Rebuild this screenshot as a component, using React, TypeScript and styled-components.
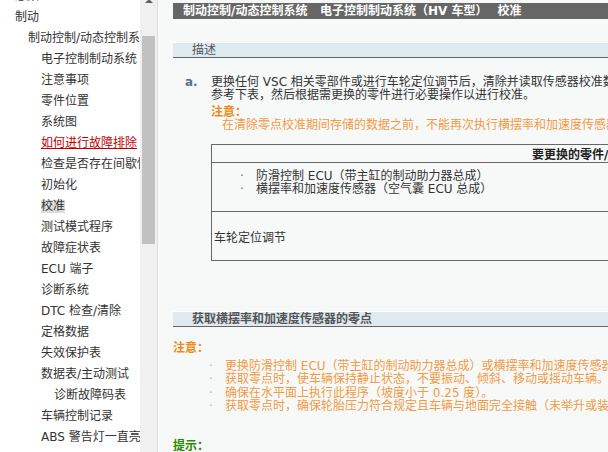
import styled, { createGlobalStyle } from "styled-components";

const GlobalStyle = createGlobalStyle`
  html, body {
    margin: 0;
    padding: 0;
    overflow: hidden;
  }
  body {
    font-family: "DejaVu Sans", "Noto Sans CJK SC", sans-serif;
    font-size: 12px;
    color: #333;
  }
`;

export const Page = styled.div`
  display: flex;
  height: 452px;
  width: 608px;
  overflow: hidden;
`;

export const NavPane = styled.div`
  background: #fff;
  flex: 0 0 140px;
  overflow: hidden;
`;

export const Tree = styled.ul`
  list-style: none;
  margin: -14px 0 0;
  padding: 0;
`;

export const TreeItem = styled.li<{ $level: number }>`
  color: #333;
  line-height: 21px;
  padding-left: ${(props) => 2 + props.$level * 13}px;
  white-space: nowrap;
`;

export const TreeLink = styled.span`
  color: #c00000;
  text-decoration: underline;
`;

export const TreeCurrent = styled.span`
  background: #dcdcdc;
  display: inline-block;
  line-height: 13px;
`;

export const ScrollTrack = styled.div`
  background: #f0f0f0;
  display: flex;
  flex: 0 0 17px;
  flex-direction: column;
  align-items: center;
`;

export const ScrollArrow = styled.div`
  border-bottom: 4px solid #606060;
  border-left: 4px solid transparent;
  border-right: 4px solid transparent;
  height: 0;
  margin-top: -1px;
  width: 0;
`;

export const ScrollThumb = styled.div`
  background: #c1c1c1;
  height: 208px;
  margin-top: 33px;
  width: 13px;
`;

export const Divider = styled.div`
  background: #dedede;
  flex: 0 0 1px;
`;

export const Content = styled.div`
  background: #f7f9f9;
  flex: 1;
  min-width: 0;
  overflow: hidden;
  padding: 3px 0 0 15px;
`;

export const Inner = styled.div`
  width: 760px;
`;

export const TitleBar = styled.div`
  background: #666;
  color: #fff;
  display: flex;
  font-weight: bold;
  gap: 10px;
  height: 16px;
  line-height: 16px;
  padding-left: 10px;
  white-space: nowrap;
`;

export const Crumb = styled.span<{ $w: number }>`
  flex: 0 0 ${(props) => props.$w}px;
`;

export const SectionHeader = styled.div<{ $bold?: boolean }>`
  background: #deeaf0;
  border-bottom: 1px solid #666;
  border-top: 1px solid #fff;
  color: #555;
  font-weight: ${(props) => (props.$bold ? "bold" : "normal")};
  height: 14px;
  line-height: 14px;
  margin-top: ${(props) => (props.$bold ? "50px" : "23px")};
  padding-left: 19px;
  white-space: nowrap;
`;

export const Step = styled.div`
  display: flex;
  margin-top: 18px;
`;

export const StepMark = styled.div`
  box-sizing: border-box;
  color: #5b7090;
  flex: 0 0 38px;
  font-weight: bold;
  line-height: 13px;
  padding-left: 12px;
`;

export const StepBody = styled.div`
  flex: 1;
`;

export const Line = styled.div`
  line-height: 13px;
  white-space: nowrap;
`;

export const NoticeTitle = styled.div<{ $gap: number }>`
  color: #ef8a16;
  font-weight: bold;
  line-height: 13px;
  margin-top: ${(props) => props.$gap}px;
`;

export const NoticeText = styled.div`
  color: #f29a44;
  line-height: 13px;
  padding-left: 11px;
  white-space: nowrap;
`;

export const PartsTable = styled.table`
  border-collapse: collapse;
  border-left: 1px solid #666;
  border-top: 1px solid #666;
  margin-top: 12px;
  width: 750px;
`;

export const HeadCell = styled.th`
  border-bottom: 1px solid #666;
  color: #222;
  font-weight: bold;
  height: 17px;
  padding: 0 0 0 320px;
  text-align: left;
  white-space: nowrap;
`;

export const Cell = styled.td<{ $top?: boolean }>`
  border-bottom: 1px solid #666;
  height: ${(props) => (props.$top ? "41px" : "48px")};
  padding: ${(props) => (props.$top ? "7px 0 0 28px" : "0 0 0 2px")};
  vertical-align: ${(props) => (props.$top ? "top" : "middle")};
  white-space: nowrap;
`;

export const Bullets = styled.ul<{ $tone: "plain" | "warn" }>`
  color: ${(props) => (props.$tone === "warn" ? "#f29a44" : "#333")};
  line-height: ${(props) => (props.$tone === "warn" ? "13.4px" : "13px")};
  list-style: none;
  margin: ${(props) => (props.$tone === "warn" ? "5px 0 0 36px" : "0")};
  padding: 0;
`;

export const Bullet = styled.li<{ $tone: "plain" | "warn" }>`
  display: flex;
  white-space: nowrap;

  &::before {
    color: ${(props) => (props.$tone === "warn" ? "#f0a050" : "#5b7090")};
    content: "·";
    flex: 0 0 16px;
  }
`;

export const HintTitle = styled.div`
  color: #2a8a00;
  font-weight: bold;
  line-height: 13px;
  margin-top: 26px;
`;

const navItems: { label: string; level: number; kind?: "link" | "current" }[] = [
  { label: "悬架", level: 1 },
  { label: "制动", level: 1 },
  { label: "制动控制/动态控制系统", level: 2 },
  { label: "电子控制制动系统", level: 3 },
  { label: "注意事项", level: 3 },
  { label: "零件位置", level: 3 },
  { label: "系统图", level: 3 },
  { label: "如何进行故障排除", level: 3, kind: "link" },
  { label: "检查是否存在间歇性故障", level: 3 },
  { label: "初始化", level: 3 },
  { label: "校准", level: 3, kind: "current" },
  { label: "测试模式程序", level: 3 },
  { label: "故障症状表", level: 3 },
  { label: "ECU 端子", level: 3 },
  { label: "诊断系统", level: 3 },
  { label: "DTC 检查/清除", level: 3 },
  { label: "定格数据", level: 3 },
  { label: "失效保护表", level: 3 },
  { label: "数据表/主动测试", level: 3 },
  { label: "诊断故障码表", level: 4 },
  { label: "车辆控制记录", level: 3 },
  { label: "ABS 警告灯一直亮", level: 3 },
];

const zeroPointNotes = [
  "更换防滑控制 ECU（带主缸的制动助力器总成）或横摆率和加速度传感器（空气囊 ECU 总成）后，必须获取零点。",
  "获取零点时，使车辆保持静止状态，不要振动、倾斜、移动或摇动车辆。",
  "确保在水平面上执行此程序（坡度小于 0.25 度）。",
  "获取零点时，确保轮胎压力符合规定且车辆与地面完全接触（未举升或装载）。",
];

const App = () => {
  return (
    <>
      <GlobalStyle />
      <Page>
        <NavPane>
          <Tree>
            {navItems.map((item) => (
              <TreeItem key={item.label} $level={item.level}>
                {item.kind === "link" ? (
                  <TreeLink>{item.label}</TreeLink>
                ) : item.kind === "current" ? (
                  <TreeCurrent>{item.label}</TreeCurrent>
                ) : (
                  item.label
                )}
              </TreeItem>
            ))}
          </Tree>
        </NavPane>
        <ScrollTrack>
          <ScrollArrow />
          <ScrollThumb />
        </ScrollTrack>
        <Divider />
        <Content>
          <Inner>
            <TitleBar>
              <Crumb $w={127}>制动控制/动态控制系统</Crumb>
              <Crumb $w={165}>电子控制制动系统（HV 车型）</Crumb>
              <Crumb $w={40}>校准</Crumb>
            </TitleBar>

            <SectionHeader>描述</SectionHeader>

            <Step>
              <StepMark>a.</StepMark>
              <StepBody>
                <Line>
                  更换任何 VSC 相关零部件或进行车轮定位调节后，清除并读取传感器校准数据。
                </Line>
                <Line>参考下表，然后根据需更换的零件进行必要操作以进行校准。</Line>
                <NoticeTitle $gap={4}>注意：</NoticeTitle>
                <NoticeText>
                  在清除零点校准期间存储的数据之前，不能再次执行横摆率和加速度传感器的零点校准。
                </NoticeText>
                <PartsTable>
                  <thead>
                    <tr>
                      <HeadCell>要更换的零件/操作</HeadCell>
                    </tr>
                  </thead>
                  <tbody>
                    <tr>
                      <Cell $top>
                        <Bullets $tone="plain">
                          <Bullet $tone="plain">防滑控制 ECU（带主缸的制动助力器总成）</Bullet>
                          <Bullet $tone="plain">横摆率和加速度传感器（空气囊 ECU 总成）</Bullet>
                        </Bullets>
                      </Cell>
                    </tr>
                    <tr>
                      <Cell>车轮定位调节</Cell>
                    </tr>
                  </tbody>
                </PartsTable>
              </StepBody>
            </Step>

            <SectionHeader $bold>获取横摆率和加速度传感器的零点</SectionHeader>

            <NoticeTitle $gap={15}>注意：</NoticeTitle>
            <Bullets $tone="warn">
              {zeroPointNotes.map((note) => (
                <Bullet key={note} $tone="warn">
                  {note}
                </Bullet>
              ))}
            </Bullets>

            <HintTitle>提示：</HintTitle>
          </Inner>
        </Content>
      </Page>
    </>
  );
};

export default App;
